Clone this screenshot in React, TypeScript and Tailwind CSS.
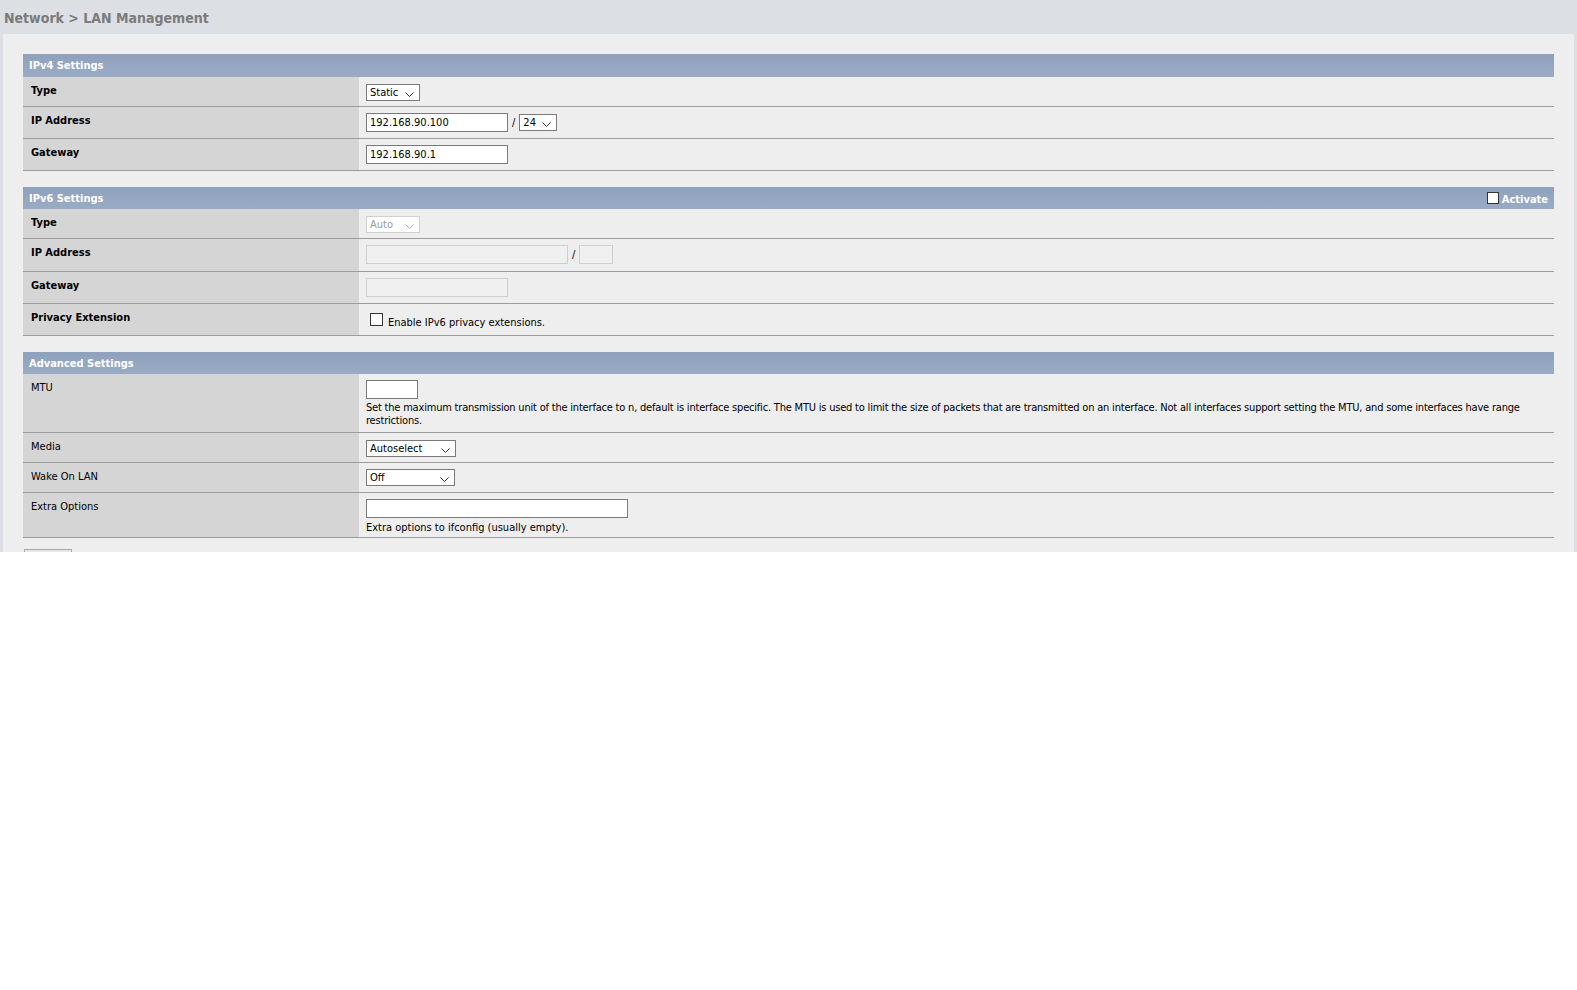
import type { ReactNode } from "react";

const font = { fontFamily: "Tahoma, 'DejaVu Sans Condensed', 'Liberation Sans', sans-serif" };

function Chevron({ disabled }: { disabled?: boolean }) {
  return (
    <svg
      width="9"
      height="5"
      viewBox="0 0 9 5"
      className="pointer-events-none absolute right-[5px] top-1/2 -translate-y-[1px]"
    >
      <path d="M0.5 0.5 L4.5 4.5 L8.5 0.5" fill="none" stroke={disabled ? "#b0b0b0" : "#333"} strokeWidth="1" />
    </svg>
  );
}

function Select({ value, width, disabled }: { value: string; width: string; disabled?: boolean }) {
  return (
    <div className={`relative inline-flex h-[17px] items-center border bg-white pl-[3px] text-[11px] ${width} ${disabled ? "border-[#cfcfcf] text-[#9a9a9a]" : "border-[#7a7a7a] text-black"}`}>
      {value}
      <Chevron disabled={disabled} />
    </div>
  );
}

function Input({ value, width, disabled }: { value?: string; width: string; disabled?: boolean }) {
  return (
    <div className={`inline-flex h-[19px] items-center border pl-[3px] text-[11px] ${width} ${disabled ? "border-[#cfcfcf] bg-[#f0f0f0]" : "border-[#7a7a7a] bg-white text-black"}`}>
      {value}
    </div>
  );
}

function Header({ title, h = "h-[22px]", right }: { title: string; h?: string; right?: ReactNode }) {
  return (
    <div className={`flex ${h} items-center justify-between bg-gradient-to-b from-[#8ea1bd] to-[#9aabc5] pl-[6px] pr-[6px] pt-[2px] text-[11px] font-bold text-white`}>
      <span>{title}</span>
      {right}
    </div>
  );
}

function Row({ label, bold = true, h, children, pt = "pt-[7px]" }: { label: string; bold?: boolean; h: string; children: ReactNode; pt?: string }) {
  return (
    <div className={`flex ${h} border-b border-[#9c9c9c]`}>
      <div className={`w-[336px] shrink-0 bg-[#d5d5d5] pl-[8px] pt-[7px] text-[11px] leading-[13px] text-black ${bold ? "font-bold" : ""}`}>
        {label}
      </div>
      <div className={`flex-1 bg-[#eeeeee] pl-[7px] ${pt} text-[11px] leading-[13px] text-black`}>{children}</div>
    </div>
  );
}

export default function App() {
  return (
    <div className="min-h-[990px] bg-white" style={font}>
      <div className="h-[552px] overflow-hidden bg-[#dcdfe4] px-[3px]">
        <div className="flex h-[34px] items-center pl-[1px] pt-[3px] text-[14px] font-bold text-[#7b7b7b]">
          Network &gt; LAN Management
        </div>
        <div className="h-[518px] bg-[#eeeeee] pl-[20px] pr-[20px] pt-[20px]">
          <Header title="IPv4 Settings" h="h-[23px]" />
          <Row label="Type" h="h-[30px]" pt="pt-[7px]">
            <Select value="Static" width="w-[54px]" />
          </Row>
          <Row label="IP Address" h="h-[32px]" pt="pt-[6px]">
            <div className="flex items-center">
              <Input value="192.168.90.100" width="w-[142px]" />
              <span className="mx-[4px]">/</span>
              <Select value="24" width="w-[38px]" />
            </div>
          </Row>
          <Row label="Gateway" h="h-[32px]" pt="pt-[6px]">
            <Input value="192.168.90.1" width="w-[142px]" />
          </Row>

          <div className="h-[16px]" />
          <Header
            title="IPv6 Settings"
            right={
              <span className="flex items-center gap-[3px] pt-[2px]">
                <span className="mb-[4px] inline-block h-[12px] w-[12px] border border-[#333] bg-white" />
                Activate
              </span>
            }
          />
          <Row label="Type" h="h-[30px]">
            <Select value="Auto" width="w-[54px]" disabled />
          </Row>
          <Row label="IP Address" h="h-[33px]" pt="pt-[6px]">
            <div className="flex items-center">
              <Input width="w-[202px]" disabled />
              <span className="mx-[4px]">/</span>
              <Input width="w-[34px]" disabled />
            </div>
          </Row>
          <Row label="Gateway" h="h-[32px]" pt="pt-[6px]">
            <Input width="w-[142px]" disabled />
          </Row>
          <Row label="Privacy Extension" h="h-[32px]" pt="pt-[9px]">
            <div className="flex items-end pl-[4px]">
              <span className="inline-block h-[13px] w-[13px] border border-[#333] bg-white" />
              <span className="ml-[5px] translate-y-[2px] leading-[11px]">Enable IPv6 privacy extensions.</span>
            </div>
          </Row>

          <div className="h-[16px]" />
          <Header title="Advanced Settings" />
          <Row label="MTU" bold={false} h="h-[59px]" pt="pt-[6px]">
            <Input width="w-[52px]" />
            <div className="-mt-[1px] tracking-[-0.2px]">
              Set the maximum transmission unit of the interface to n, default is interface specific. The MTU is used to limit the size of packets that are transmitted on an interface. Not all interfaces support setting the MTU, and some interfaces have range restrictions.
            </div>
          </Row>
          <Row label="Media" bold={false} h="h-[30px]">
            <Select value="Autoselect" width="w-[90px]" />
          </Row>
          <Row label="Wake On LAN" bold={false} h="h-[30px]" pt="pt-[6px]">
            <Select value="Off" width="w-[89px]" />
          </Row>
          <Row label="Extra Options" bold={false} h="h-[45px]" pt="pt-[6px]">
            <Input width="w-[262px]" />
            <div>Extra options to ifconfig (usually empty).</div>
          </Row>
          <div className="mt-[11px] ml-[1px] h-[20px] w-[48px] border border-[#a8a8a8] bg-[#e6e6e6]" />
        </div>
      </div>
    </div>
  );
}
